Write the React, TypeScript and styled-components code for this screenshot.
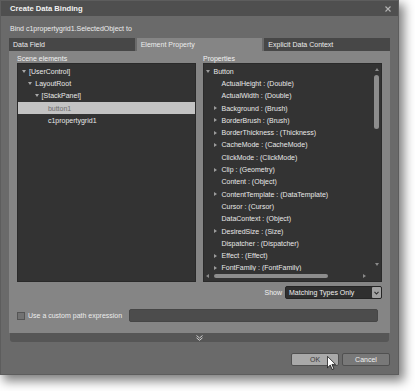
import styled, { createGlobalStyle } from "styled-components";

const GlobalStyle = createGlobalStyle`
  html, body {
    margin: 0;
    padding: 0;
    background: #ffffff;
  }
  body {
    font-family: "Liberation Sans", Arial, sans-serif;
    font-size: 7px;
    color: #e8e8e8;
  }
`;

const Page = styled.div`
  position: relative;
  width: 415px;
  height: 391px;
  overflow: hidden;
`;

const Dialog = styled.div`
  width: 399px;
  height: 375px;
  box-sizing: border-box;
  border: 1px solid #5d5d5d;
  background: #6a6a6a;
  box-shadow: 4px 5px 10px 1px rgba(0, 0, 0, 0.5);
  display: flex;
  flex-direction: column;
`;

const TitleBar = styled.div`
  height: 15px;
  background: #4f4f4f;
  display: flex;
  align-items: center;
  justify-content: space-between;
  padding: 0 7px 0 9px;
`;

const Title = styled.span`
  font-size: 7.6px;
  font-weight: bold;
  color: #f2f2f2;
`;

const Body = styled.div`
  padding: 0 8px;
  display: flex;
  flex-direction: column;
`;

const BindLine = styled.div`
  padding: 8px 0 4px 1px;
  line-height: 10px;
  color: #ececec;
`;

const TabRow = styled.div`
  display: flex;
  gap: 2px;
  height: 13px;
`;

const Tab = styled.div<{ $active?: boolean }>`
  flex: 1;
  background: ${(p) => (p.$active ? "#858585" : "#474747")};
  color: #ececec;
  padding-left: 4px;
  line-height: 13px;
  white-space: nowrap;
`;

const Panel = styled.div`
  background: #858585;
  padding: 3px 8px 11px 8px;
  display: flex;
  flex-direction: column;
`;

const Columns = styled.div`
  display: grid;
  grid-template-columns: 179px 179px;
  gap: 7px;
`;

const Column = styled.div`
  display: flex;
  flex-direction: column;
`;

const Label = styled.div`
  line-height: 9px;
  color: #f2f2f2;
`;

const ListBox = styled.div`
  height: 219px;
  box-sizing: border-box;
  background: #333333;
  border: 1px solid #2a2a2a;
  overflow: hidden;
`;

const PropBox = styled(ListBox)`
  display: grid;
  grid-template-columns: 1fr 9px;
  grid-template-rows: 1fr 10px;
`;

const Rows = styled.div`
  padding-top: 1px;
  overflow: hidden;
`;

const Row = styled.div<{ $indent: number; $selected?: boolean }>`
  height: 12.3px;
  display: flex;
  align-items: center;
  padding-left: ${(p) => p.$indent}px;
  white-space: nowrap;
  background: ${(p) => (p.$selected ? "#c3c3c3" : "transparent")};
  color: ${(p) => (p.$selected ? "#6e6e6e" : "#e8e8e8")};
`;

const Twisty = styled.span<{ $w: number }>`
  width: ${(p) => p.$w}px;
  flex: none;
  display: flex;
  align-items: center;
`;

const VScroll = styled.div`
  display: flex;
  flex-direction: column;
  align-items: center;
  padding: 4px 0 5px;
`;

const VThumb = styled.div`
  width: 5px;
  height: 54px;
  margin-top: 4px;
  border-radius: 3px;
  background: #8d8d8d;
`;

const HScroll = styled.div`
  display: flex;
  align-items: center;
  padding: 0 6px 0 2px;
`;

const HThumb = styled.div`
  width: 114px;
  height: 4px;
  margin-left: 5px;
  border-radius: 3px;
  background: #8d8d8d;
`;

const Spacer = styled.div`
  flex: 1;
`;

const Corner = styled.div`
  background: #333333;
`;

const ShowRow = styled.div`
  margin-top: 4px;
  display: flex;
  justify-content: flex-end;
  align-items: center;
  gap: 3px;
`;

const ShowLabel = styled.span`
  color: #f2f2f2;
`;

const Select = styled.div`
  width: 97px;
  height: 13px;
  box-sizing: border-box;
  background: #2f2f2f;
  border: 1px solid #252525;
  border-radius: 2px;
  display: flex;
  align-items: center;
  color: #f0f0f0;
  padding-left: 3px;
`;

const SelectButton = styled.div`
  margin-left: auto;
  width: 9px;
  height: 11px;
  background: #a2a2a2;
  border-radius: 1px;
  display: flex;
  align-items: center;
  justify-content: center;
`;

const PathRow = styled.div`
  margin-top: 10px;
  display: flex;
  align-items: center;
`;

const Check = styled.div`
  width: 8px;
  height: 8px;
  box-sizing: border-box;
  background: #727272;
  border: 1px solid #555555;
  margin-right: 3px;
`;

const PathLabel = styled.span`
  color: #ececec;
  margin-right: 7px;
  white-space: nowrap;
`;

const PathInput = styled.div`
  flex: 1;
  height: 13px;
  box-sizing: border-box;
  background: #4c4c4c;
  border: 1px solid #464646;
  border-radius: 2px;
  margin-right: 4px;
`;

const ExpandBar = styled.div`
  height: 9px;
  margin: 0 1px;
  background: #565656;
  border-radius: 0 0 3px 3px;
  display: flex;
  align-items: center;
  justify-content: center;
`;

const Footer = styled.div`
  padding: 11px 0 0;
  display: flex;
  justify-content: flex-end;
  gap: 3px;
`;

const Button = styled.div<{ $primary?: boolean }>`
  width: 48px;
  height: 13px;
  box-sizing: border-box;
  border: 1px solid #505050;
  border-radius: 2px;
  background: ${(p) => (p.$primary ? "#a9a9a9" : "#787878")};
  color: ${(p) => (p.$primary ? "#3a3a3a" : "#efefef")};
  display: flex;
  align-items: center;
  justify-content: center;
`;

const Cursor = styled.svg`
  position: absolute;
  left: 327px;
  top: 356px;
`;

type Item = { label: string; depth: number; arrow?: "open" | "closed"; selected?: boolean };

const sceneItems: Item[] = [
  { label: "[UserControl]", depth: 0, arrow: "open" },
  { label: "LayoutRoot", depth: 1, arrow: "open" },
  { label: "[StackPanel]", depth: 2, arrow: "open" },
  { label: "button1", depth: 3, selected: true },
  { label: "c1propertygrid1", depth: 3 },
];

const propItems: Item[] = [
  { label: "Button", depth: 0, arrow: "open" },
  { label: "ActualHeight : (Double)", depth: 1 },
  { label: "ActualWidth : (Double)", depth: 1 },
  { label: "Background : (Brush)", depth: 1, arrow: "closed" },
  { label: "BorderBrush : (Brush)", depth: 1, arrow: "closed" },
  { label: "BorderThickness : (Thickness)", depth: 1, arrow: "closed" },
  { label: "CacheMode : (CacheMode)", depth: 1, arrow: "closed" },
  { label: "ClickMode : (ClickMode)", depth: 1 },
  { label: "Clip : (Geometry)", depth: 1, arrow: "closed" },
  { label: "Content : (Object)", depth: 1 },
  { label: "ContentTemplate : (DataTemplate)", depth: 1, arrow: "closed" },
  { label: "Cursor : (Cursor)", depth: 1 },
  { label: "DataContext : (Object)", depth: 1 },
  { label: "DesiredSize : (Size)", depth: 1, arrow: "closed" },
  { label: "Dispatcher : (Dispatcher)", depth: 1 },
  { label: "Effect : (Effect)", depth: 1, arrow: "closed" },
  { label: "FontFamily : (FontFamily)", depth: 1, arrow: "closed" },
];

function Arrow({ kind, color = "#a8a8a8" }: { kind: "open" | "closed" | "up" | "down" | "left" | "right"; color?: string }) {
  if (kind === "open" || kind === "down")
    return (
      <svg width="4" height="3" viewBox="0 0 4 3">
        <path d="M0 0H4L2 3Z" fill={color} />
      </svg>
    );
  if (kind === "up")
    return (
      <svg width="4" height="3" viewBox="0 0 4 3">
        <path d="M0 3H4L2 0Z" fill={color} />
      </svg>
    );
  if (kind === "left")
    return (
      <svg width="3" height="4" viewBox="0 0 3 4">
        <path d="M3 0V4L0 2Z" fill={color} />
      </svg>
    );
  return (
    <svg width="3" height="4" viewBox="0 0 3 4">
      <path d="M0 0V4L3 2Z" fill={color} />
    </svg>
  );
}

function App() {
  return (
    <Page>
      <GlobalStyle />
      <Dialog>
        <TitleBar>
          <Title>Create Data Binding</Title>
          <svg width="6" height="6" viewBox="0 0 6 6">
            <path d="M0.5 0.5L5.5 5.5M5.5 0.5L0.5 5.5" stroke="#b4b4b4" strokeWidth="1.1" />
          </svg>
        </TitleBar>
        <Body>
          <BindLine>Bind c1propertygrid1.SelectedObject to</BindLine>
          <TabRow>
            <Tab>Data Field</Tab>
            <Tab $active>Element Property</Tab>
            <Tab>Explicit Data Context</Tab>
          </TabRow>
          <Panel>
            <Columns>
              <Column>
                <Label>Scene elements</Label>
                <ListBox>
                  <Rows>
                    {sceneItems.map((it) => (
                      <Row key={it.label} $indent={4 + it.depth * 6.3} $selected={it.selected}>
                        <Twisty $w={7}>{it.arrow && <Arrow kind={it.arrow} />}</Twisty>
                        {it.label}
                      </Row>
                    ))}
                  </Rows>
                </ListBox>
              </Column>
              <Column>
                <Label>Properties</Label>
                <PropBox>
                  <Rows>
                    {propItems.map((it) => (
                      <Row key={it.label} $indent={2 + it.depth * 8}>
                        <Twisty $w={7.5}>{it.arrow && <Arrow kind={it.arrow} color="#9c9c9c" />}</Twisty>
                        {it.label}
                      </Row>
                    ))}
                  </Rows>
                  <VScroll>
                    <Arrow kind="up" color="#8a8a8a" />
                    <VThumb />
                    <Spacer />
                    <Arrow kind="down" color="#8a8a8a" />
                  </VScroll>
                  <HScroll>
                    <Arrow kind="left" color="#8a8a8a" />
                    <HThumb />
                    <Spacer />
                    <Arrow kind="right" color="#8a8a8a" />
                  </HScroll>
                  <Corner />
                </PropBox>
              </Column>
            </Columns>
            <ShowRow>
              <ShowLabel>Show</ShowLabel>
              <Select>
                Matching Types Only
                <SelectButton>
                  <svg width="5" height="4" viewBox="0 0 5 4">
                    <path d="M0.5 0.8L2.5 3L4.5 0.8" fill="none" stroke="#2e2e2e" strokeWidth="1.1" />
                  </svg>
                </SelectButton>
              </Select>
            </ShowRow>
            <PathRow>
              <Check />
              <PathLabel>Use a custom path expression</PathLabel>
              <PathInput />
            </PathRow>
          </Panel>
          <ExpandBar>
            <svg width="7" height="6" viewBox="0 0 7 6">
              <path d="M0.5 0.5L3.5 3L6.5 0.5M0.5 2.8L3.5 5.3L6.5 2.8" fill="none" stroke="#cfcfcf" strokeWidth="1" />
            </svg>
          </ExpandBar>
          <Footer>
            <Button $primary>OK</Button>
            <Button>Cancel</Button>
          </Footer>
        </Body>
      </Dialog>
      <Cursor width="9" height="14" viewBox="0 0 12 19">
        <path d="M0.5 0.5V16L4.3 12.3L7 18.3L9.2 17.3L6.6 11.4H11.5Z" fill="#ffffff" stroke="#000000" strokeWidth="1" strokeLinejoin="round" />
      </Cursor>
    </Page>
  );
}

export default App;
